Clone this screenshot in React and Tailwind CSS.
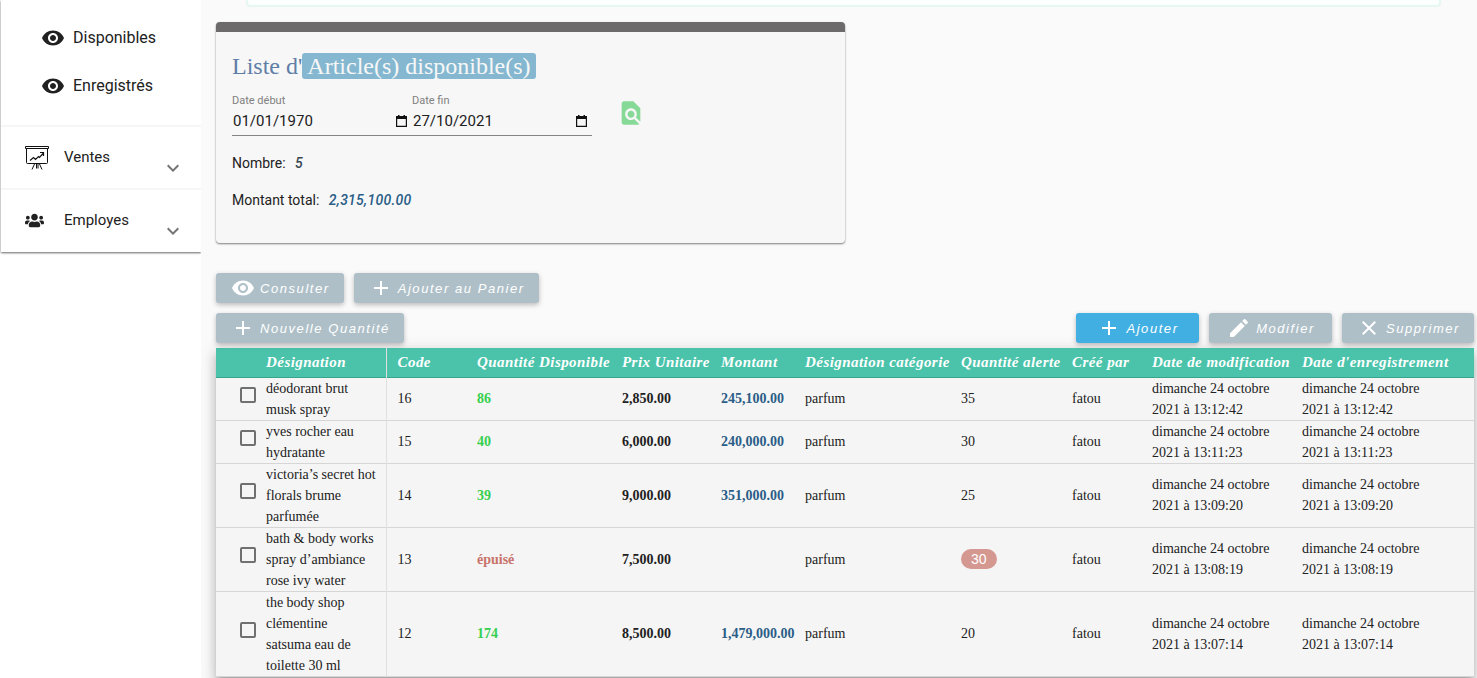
import React from "react";
import {
  MdAdd,
  MdClose,
  MdEdit,
  MdFindInPage,
  MdKeyboardArrowDown,
  MdRemoveRedEye,
} from "react-icons/md";
import { FaUsers } from "react-icons/fa";

const ROWS = [
  { id: 1, name: "déodorant brut musk spray", code: 16, stock: "86", price: "2,850.00", total: "245,100.00", alert: 35, date: "dimanche 24 octobre 2021 à 13:12:42" },
  { id: 2, name: "yves rocher eau hydratante", code: 15, stock: "40", price: "6,000.00", total: "240,000.00", alert: 30, date: "dimanche 24 octobre 2021 à 13:11:23" },
  { id: 3, name: "victoria’s secret hot florals brume parfumée", code: 14, stock: "39", price: "9,000.00", total: "351,000.00", alert: 25, date: "dimanche 24 octobre 2021 à 13:09:20" },
  { id: 4, name: "bath & body works spray d’ambiance rose ivy water", code: 13, stock: null, price: "7,500.00", total: "", alert: 30, date: "dimanche 24 octobre 2021 à 13:08:19" },
  { id: 5, name: "the body shop clémentine satsuma\u00a0eau de toilette 30 ml", code: 12, stock: "174", price: "8,500.00", total: "1,479,000.00", alert: 20, date: "dimanche 24 octobre 2021 à 13:07:14" },
];

const COLUMNS = [
  { label: "Code", width: "w-[81px] pl-[11px]" },
  { label: "Quantité Disponible", width: "w-[145px] pl-2.5" },
  { label: "Prix Unitaire", width: "w-[99px] pl-2.5" },
  { label: "Montant", width: "w-[84px] pl-2.5" },
  { label: "Désignation catégorie", width: "w-[156px] pl-2.5" },
  { label: "Quantité alerte", width: "w-[111px] pl-2.5" },
  { label: "Créé par", width: "w-[80px] pl-2.5" },
  { label: "Date de modification", width: "w-[150px] pl-2.5" },
  { label: "Date d'enregistrement", width: "pl-2.5" },
];

function BoardIcon() {
  return (
    <svg width="24" height="24" viewBox="0 0 24 24" fill="none" stroke="#111" aria-hidden="true">
      <path d="M0.5 0.5h23v2h-23z" />
      <path d="M1.5 2.500v14q0 1 1 1h19q1 0 1-1v-14" />
      <path d="M5 14.500l3.500-3 2 2 3-3 1 1 4-4.500M15 6.500h3.500v3.500" strokeWidth="1.200" />
      <path d="M9.500 18L7 23.500M11.500 18v4.500M13 18v4.500M14.500 18l2.500 5.500" />
    </svg>
  );
}

function CalendarIcon() {
  return (
    <svg width="11" height="12" viewBox="0 0 11 12" aria-hidden="true">
      <path d="M2 0h1.500v1h4V0H9v1h2v11H0V1h2zM1.200 4v6.800h8.600V4z" fillRule="evenodd" fill="#111" />
    </svg>
  );
}

function SubLink({ label }) {
  return (
    <a href="#" className="flex h-12 items-center gap-2 pl-10">
      <MdRemoveRedEye size={24} />
      {label}
    </a>
  );
}

function MenuGroup({ icon, label }) {
  return (
    <button type="button" className="flex h-[63px] w-full items-center border-t-2 border-[#f6f6f6] pl-6 pr-4 text-left text-[15px]">
      <span className="flex w-[39px] items-center">{icon}</span>
      <span className="flex-1">{label}</span>
      <MdKeyboardArrowDown size={24} className="mt-5 text-[#757575]" />
    </button>
  );
}

function DateField({ id, label, value }) {
  return (
    <div className="w-[180px] border-b border-[#858585]">
      <label htmlFor={id} className="block text-[11px] leading-4 text-[#808080]">{label}</label>
      <div className="flex h-[26px] items-center pb-0.5 pr-[5px]">
        <input id={id} type="text" defaultValue={value} className="w-full min-w-0 flex-1 bg-transparent pl-px text-[15px] text-[#212121] outline-none" />
        <button type="button" aria-label={"Choisir : " + label}><CalendarIcon /></button>
      </div>
    </div>
  );
}

function ActionButton({ icon, label, primary = false }) {
  return (
    <button
      type="button"
      className={
        "flex h-[30px] min-w-[123px] items-center justify-center gap-[5px] whitespace-nowrap rounded-[3px] pl-[15px] pr-3.5 font-['Liberation_Sans',sans-serif] text-[13px] italic tracking-[0.12em] text-white shadow-[0_2px_5px_rgba(0,0,0,0.25)] " +
        (primary ? "bg-[#42afe3]" : "bg-[#aebfc8]")
      }
    >
      {icon}
      <span className="pt-0.5">{label}</span>
    </button>
  );
}

function HeaderCell({ column }) {
  return <th scope="col" className={column.width}>{column.label}</th>;
}

export default function App() {
  return (
    <div className="flex min-h-screen bg-white font-[Roboto,sans-serif] text-[#212121]">
      <nav className="w-[201px] shrink-0">
        <div className="ml-px bg-white pb-px text-base shadow-[0_1px_2px_rgba(0,0,0,0.6)]">
          <div className="pb-[15px] pt-3.5">
            <SubLink label="Disponibles" />
            <SubLink label="Enregistrés" />
          </div>
          <MenuGroup icon={<BoardIcon />} label="Ventes" />
          <MenuGroup icon={<FaUsers size={19} />} label="Employes" />
        </div>
      </nav>

      <main className="min-w-0 flex-1 overflow-hidden bg-[#fafafa] pl-[15px] pr-[3px]">
        <div className="ml-[30px] mr-[33px] h-[7px] rounded-b border-2 border-t-0 border-[#e6f6f1] bg-[#fbfffe]" />

        <section className="mt-[15px] h-[221px] w-1/2 rounded border-t-[10px] border-[#6c6a6a] bg-[#f7f7f7] px-4 pt-5 shadow-[0_1px_2px_rgba(0,0,0,0.5)]">
          <h1 className="font-['Liberation_Serif',serif] text-2xl leading-7 text-[#5f7ea6]">
            Liste d'<span className="rounded-[3px] bg-[#85b8d0] px-[5px] text-[#f7f7f7]">Article(s) disponible(s)</span>
          </h1>
          <div className="mt-[13px] flex items-start">
            <DateField id="date-debut" label="Date début" value="01/01/1970" />
            <DateField id="date-fin" label="Date fin" value="27/10/2021" />
            <button type="button" aria-label="Rechercher" className="ml-[25px] mt-1.5 text-[#86d997]">
              <MdFindInPage size={28} />
            </button>
          </div>
          <p className="mt-[17px] text-sm leading-5">
            Nombre: <em className="ml-1.5 font-medium tracking-[0.02em] text-[#37474f]">5</em>
          </p>
          <p className="mt-[17px] text-sm leading-5">
            Montant total: <em className="ml-1.5 font-medium tracking-[0.02em] text-[#2a5d87]">2,315,100.00</em>
          </p>
        </section>

        <div className="mt-[30px] flex items-end justify-between">
          <div className="flex w-1/3 flex-wrap gap-2.5">
            <ActionButton icon={<MdRemoveRedEye size={24} />} label="Consulter" />
            <ActionButton icon={<MdAdd size={24} />} label="Ajouter au Panier" />
            <ActionButton icon={<MdAdd size={24} />} label="Nouvelle Quantité" />
          </div>
          <div className="flex gap-2.5">
            <ActionButton primary icon={<MdAdd size={24} />} label="Ajouter" />
            <ActionButton icon={<MdEdit size={24} />} label="Modifier" />
            <ActionButton icon={<MdClose size={24} />} label="Supprimer" />
          </div>
        </div>

        <table className="mt-[5px] w-full table-fixed border-collapse bg-[#f5f5f5] text-left font-['Liberation_Serif',serif] text-sm leading-[21px] shadow-[0_5px_5px_-3px_rgba(0,0,0,0.2),0_8px_10px_1px_rgba(0,0,0,0.14),0_3px_14px_2px_rgba(0,0,0,0.12)]">
          <thead>
            <tr className="h-[29px] whitespace-nowrap border-b border-[#36a58c] bg-[#4ac3aa] text-[15px] italic tracking-[0.03em] text-white">
              <td className="w-[50px]" />
              <th scope="col" className="w-[120px] border-r border-[#e0e0e0]">Désignation</th>
              {COLUMNS.map((c) => <HeaderCell key={c.label} column={c} />)}
            </tr>
          </thead>
          <tbody>
            {ROWS.map((r) => (
              <tr key={r.id} className="border-b border-[#d6d6d6]">
                <td className="pb-2 pl-6">
                  <input
                    type="checkbox"
                    aria-label={r.name}
                    className="block size-4 appearance-none rounded-[2px] border-2 border-[#707070]"
                  />
                </td>
                <td className="border-r border-[#e0e0e0] pr-[9px]">{r.name}</td>
                <td className="pl-[11px]">{r.code}</td>
                <td className={"pl-2.5 font-bold " + (r.stock ? "text-[#35d04f]" : "text-[#c9736b]")}>{r.stock || "épuisé"}</td>
                <td className="pl-2.5 font-bold">{r.price}</td>
                <td className="pl-2.5 font-bold text-[#2a5d87]">{r.total}</td>
                <td className="pl-2.5">parfum</td>
                <td className="pl-2.5">
                  {r.stock ? r.alert : (
                    <span className="inline-block rounded-full bg-[#d59891] px-2.5 font-['Liberation_Sans',sans-serif] leading-5 text-white">{r.alert}</span>
                  )}
                </td>
                <td className="pl-2.5">fatou</td>
                <td className="pl-2.5"><span className="block w-[130px]">{r.date}</span></td>
                <td className="pl-2.5"><span className="block w-[130px]">{r.date}</span></td>
              </tr>
            ))}
          </tbody>
        </table>
      </main>
    </div>
  );
}
